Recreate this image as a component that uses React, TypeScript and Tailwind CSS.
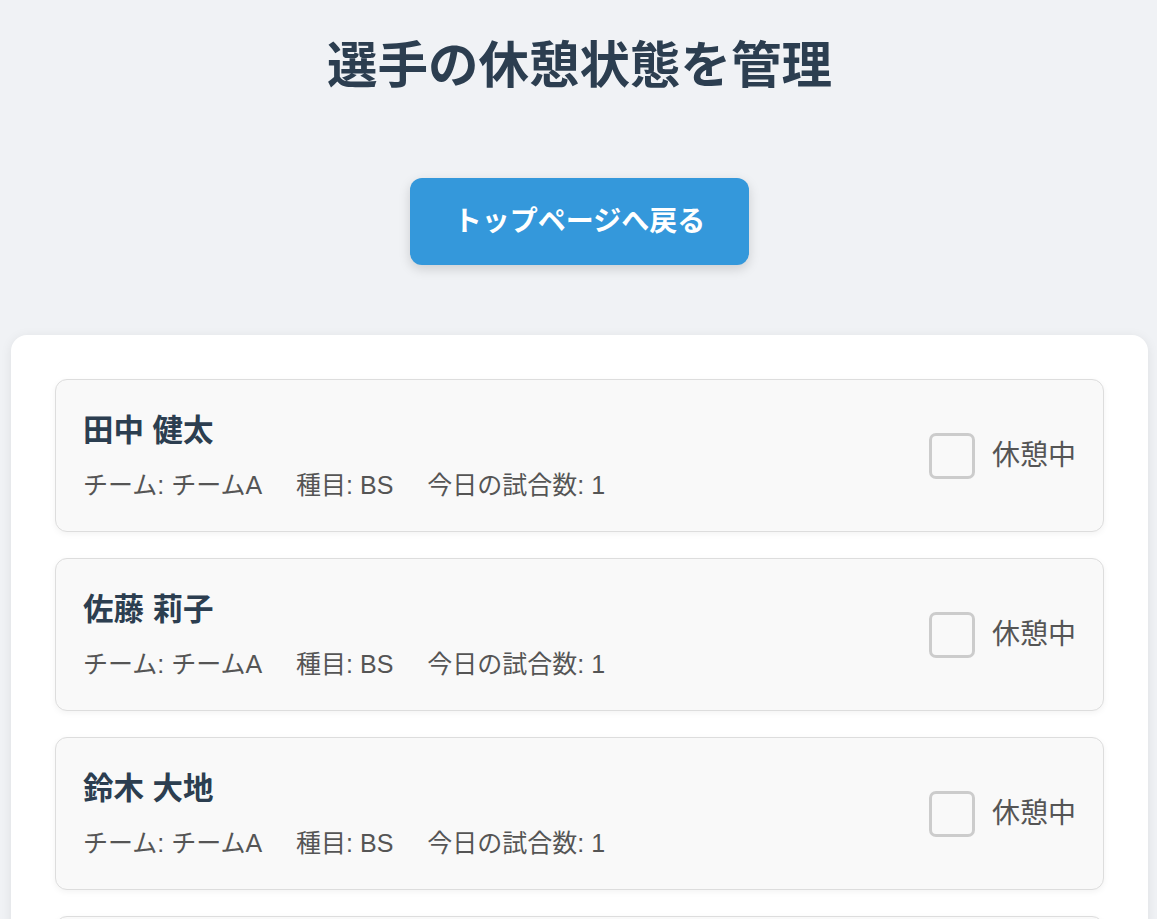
import React from "react";

const players = [
  { name: "田中 健太", team: "チームA", event: "BS", games: 1 },
  { name: "佐藤 莉子", team: "チームA", event: "BS", games: 1 },
  { name: "鈴木 大地", team: "チームA", event: "BS", games: 1 },
  { name: "高橋 美咲", team: "チームA", event: "BS", games: 1 },
];

export default function App() {
  return (
    <div
      className="min-h-screen bg-[#f0f2f5] pl-[11px] pr-[9px] pt-[36px]"
      style={{ fontFamily: '"Liberation Sans", "Noto Sans CJK JP", sans-serif' }}
    >
      <h1 className="text-center text-[50.5px] font-bold leading-[60px] text-[#2c3e50]">
        選手の休憩状態を管理
      </h1>
      <div className="mt-[82px] flex justify-center">
        <button className="rounded-xl bg-[#3498db] px-[43.5px] py-[27px] text-[28px] font-bold leading-[33px] text-white shadow-[0_4px_12px_rgba(0,0,0,0.15)]">
          トップページへ戻る
        </button>
      </div>
      <div className="mt-[70px] rounded-2xl bg-white p-[44px] shadow-[0_2px_12px_rgba(0,0,0,0.08)]">
        <div className="flex flex-col gap-[26px]">
          {players.map((p) => (
            <div
              key={p.name}
              className="flex items-center justify-between rounded-xl border border-[#dddddd] bg-[#f9f9f9] px-[27px] py-[27px] shadow-[0_2px_6px_rgba(0,0,0,0.05)]"
            >
              <div className="flex flex-col gap-[14px]">
                <div className="text-[30.5px] font-bold leading-[46px] text-[#2c3e50]">{p.name}</div>
                <div className="flex gap-[34px] text-[25px] leading-[37px] text-[#555555]">
                  <span>チーム: {p.team}</span>
                  <span>種目: {p.event}</span>
                  <span>今日の試合数: {p.games}</span>
                </div>
              </div>
              <label className="flex items-center gap-[17px]">
                <span className="block h-[46px] w-[46px] rounded-[7px] border-[3px] border-[#cccccc] bg-[#f9f9f9]" />
                <span className="text-[28px] leading-[40px] text-[#555555]">休憩中</span>
              </label>
            </div>
          ))}
        </div>
      </div>
    </div>
  );
}
